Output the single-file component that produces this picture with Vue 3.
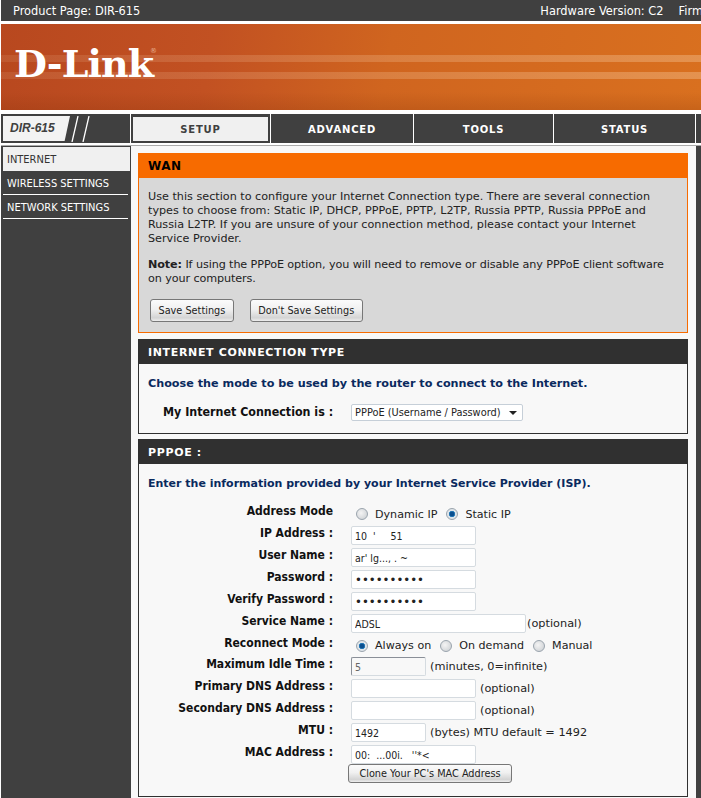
<template>
  <div class="page">
    <div class="topbar">
      <span>Product Page: DIR-615</span>
      <span class="hw">Hardware Version: C2</span>
      <span class="fw">Firmware Version: 3.01</span>
    </div>

    <div class="banner">
      <div class="logo">D-Link<span class="reg">®</span></div>
    </div>

    <div class="nav">
      <div class="model">
        <div class="model-tile">DIR-615</div>
        <svg class="slashes" width="20" height="26" viewBox="0 0 20 26">
          <path d="M7 0 L1 26 M18 0 L12 26" stroke="#fff" stroke-width="1.3" fill="none" />
        </svg>
      </div>
      <div
        v-for="t in tabs"
        :key="t.name"
        class="tab"
        :class="{ active: t.name === 'SETUP' }"
        :style="{ width: t.width + 'px' }"
      >
        <span>{{ t.name }}</span>
      </div>
    </div>

    <div class="main">
      <aside class="side">
        <div class="side-item current">INTERNET</div>
        <div class="side-item">WIRELESS SETTINGS</div>
        <div class="side-item">NETWORK SETTINGS</div>
      </aside>

      <div class="content">
        <section class="wan">
          <h2 class="wan-head">WAN</h2>
          <div class="wan-body">
            <p>Use this section to configure your Internet Connection type. There are several connection types to choose from: Static IP, DHCP, PPPoE, PPTP, L2TP, Russia PPTP, Russia PPPoE and Russia L2TP. If you are unsure of your connection method, please contact your Internet Service Provider.</p>
            <p class="note"><b>Note:</b> If using the PPPoE option, you will need to remove or disable any PPPoE client software on your computers.</p>
            <div class="btns">
              <button class="btn">Save Settings</button>
              <button class="btn">Don't Save Settings</button>
            </div>
          </div>
        </section>

        <section class="box">
          <h2 class="box-head">INTERNET CONNECTION TYPE</h2>
          <div class="box-body">
            <p class="lead wide">Choose the mode to be used by the router to connect to the Internet.</p>
            <div class="conn-row">
              <span class="label conn-label">My Internet Connection is :</span>
              <div class="select">
                <span>PPPoE (Username / Password)</span>
                <svg width="8" height="4" viewBox="0 0 8 4"><path d="M0 0 H8 L4 4 Z" fill="#222" /></svg>
              </div>
            </div>
          </div>
        </section>

        <section class="box last">
          <h2 class="box-head">PPPOE :</h2>
          <div class="box-body">
            <p class="lead">Enter the information provided by your Internet Service Provider (ISP).</p>
            <div class="form">
              <div v-for="r in rows" :key="r.label" class="row" :class="{ short: r.short }">
                <div class="label">{{ r.label }}</div>
                <div class="field" :class="{ radios: r.radios }">
                  <template v-if="r.radios">
                    <label v-for="o in r.radios" :key="o.text" class="radio-wrap">
                      <span class="radio" :class="{ on: o.on }"></span>{{ o.text }}
                    </label>
                  </template>
                  <template v-else>
                    <input
                      class="input"
                      :type="r.password ? 'password' : 'text'"
                      :value="r.value"
                      :style="{ width: r.width + 'px' }"
                      :class="{ disabled: r.disabled }"
                      readonly
                    />
                    <span v-if="r.note" class="note-text" :class="{ tight: r.tight }">{{ r.note }}</span>
                  </template>
                </div>
              </div>
              <div class="row">
                <div class="label"></div>
                <div class="clone-row"><button class="btn clone">Clone Your PC's MAC Address</button></div>
              </div>
            </div>
          </div>
        </section>
      </div>
    </div>
  </div>
</template>

<script setup>
const tabs = [
  { name: 'SETUP', width: 140 },
  { name: 'ADVANCED', width: 143 },
  { name: 'TOOLS', width: 140 },
  { name: 'STATUS', width: 142 }
]

const rows = [
  { label: 'Address Mode', radios: [{ text: 'Dynamic IP' }, { text: 'Static IP', on: true }] },
  { label: 'IP Address :', value: "10  '     51", width: 125 },
  { label: 'User Name :', value: "ar' lg..., . ~", width: 125 },
  { label: 'Password :', value: 'xxxxxxxxxx', width: 125, password: true },
  { label: 'Verify Password :', value: 'xxxxxxxxxx', width: 125, password: true },
  { label: 'Service Name :', value: 'ADSL', width: 175, note: '(optional)', tight: true },
  {
    label: 'Reconnect Mode :',
    short: true,
    radios: [{ text: 'Always on', on: true }, { text: 'On demand' }, { text: 'Manual' }]
  },
  { label: 'Maximum Idle Time :', value: '5', width: 75, note: '(minutes, 0=infinite)', disabled: true },
  { label: 'Primary DNS Address :', value: '', width: 125, note: '(optional)' },
  { label: 'Secondary DNS Address :', value: '', width: 125, note: '(optional)' },
  { label: 'MTU :', value: '1492', width: 75, note: '(bytes) MTU default = 1492' },
  { label: 'MAC Address :', value: "00:  ...00i.   ''*<", width: 125 }
]
</script>

<style>
html, body { margin: 0; background: #fff; overflow: hidden; }
</style>

<style scoped>
.page {
  width: 701px;
  height: 798px;
  overflow: hidden;
  background: #fff;
  padding-left: 1px;
  box-sizing: border-box;
  font-family: "DejaVu Sans", sans-serif;
  font-size: 11.4px;
  color: #222;
}
.topbar {
  height: 21px;
  background: #404040;
  color: #fff;
  display: flex;
  align-items: center;
  padding-left: 12px;
  white-space: nowrap;
}
.hw { margin-left: 400px; }
.fw { margin-left: 15px; }

.banner {
  margin-top: 3px;
  height: 86px;
  position: relative;
  background:
    linear-gradient(90deg, rgba(255,225,190,.1), rgba(255,225,190,.3)) 0 31px / 100% 7px no-repeat,
    linear-gradient(90deg, rgba(255,225,190,.1), rgba(255,225,190,.3)) 0 48px / 100% 7px no-repeat,
    linear-gradient(rgba(120,40,0,0) 68px, rgba(120,40,0,.18) 86px),
    linear-gradient(100deg, #b8481f 0%, #c25122 30%, #d0651f 55%, #d9701f 100%);
}
.logo {
  position: absolute;
  left: 13px;
  top: 18px;
  font-family: "DejaVu Serif", serif;
  font-weight: bold;
  font-size: 38px;
  line-height: 44px;
  letter-spacing: -0.9px;
  color: #fff;
}
.reg {
  position: absolute;
  top: 4px;
  left: 136px;
  font-family: "DejaVu Sans", sans-serif;
  font-size: 7px;
  line-height: 10px;
  font-weight: normal;
  letter-spacing: 0;
  color: #e8b090;
}

.nav {
  margin-top: 4px;
  height: 29px;
  display: flex;
  background: #404040;
  font-weight: bold;
  font-size: 10px;
  letter-spacing: 0.8px;
}
.model {
  width: 130px;
  display: flex;
  align-items: center;
  padding-left: 2px;
  box-sizing: border-box;
  border-right: 1px solid #fff;
  flex: none;
}
.model-tile {
  width: 67px;
  height: 25px;
  line-height: 25px;
  box-sizing: border-box;
  padding-left: 7px;
  background: #f3f3f3;
  clip-path: polygon(0 0, 100% 0, 92% 100%, 0 100%);
  color: #404040;
  font-family: "Liberation Sans", sans-serif;
  font-style: italic;
  font-size: 12px;
  letter-spacing: 0;
}
.slashes { margin-left: 1px; }
.tab {
  flex: none;
  box-sizing: border-box;
  border-right: 1px solid #fff;
  color: #fff;
  display: flex;
  align-items: center;
  justify-content: center;
  padding-top: 1px;
}
.tab.active {
  color: #404040;
  padding: 3px 2px;
}
.tab.active span {
  flex: 1;
  text-align: center;
  background: #f0f0f0;
  padding-top: 1px;
  line-height: 23px;
}

.main {
  margin-top: 2px;
  display: flex;
  height: 653px;
  border-top: 1px solid #aaa;
  background: #404040;
}
.side {
  width: 130px;
  flex: none;
  padding-top: 1px;
  padding-left: 2px;
  box-sizing: border-box;
  font-family: "DejaVu Sans Condensed", "DejaVu Sans", sans-serif;
  font-size: 11px;
}
.side-item {
  height: 24px;
  line-height: 26px;
  box-sizing: border-box;
  width: 125px;
  padding-left: 4px;
  color: #fff;
  border-bottom: 1px solid #fff;
  white-space: nowrap;
}
.side-item.current {
  background: #f0f0f0;
  color: #333;
  width: 127px;
  border-bottom: 0;
}
.content {
  width: 565px;
  flex: none;
  box-sizing: border-box;
  background: #f8f8f8;
  padding: 7px 8px 0 7px;
}
h2 { margin: 0; }

.wan { border: 1px solid #f76b00; border-top: 0; background: #d8d8d8; height: 180px; box-sizing: border-box; }
.wan-head {
  height: 25px;
  line-height: 26px;
  background: #f76b00;
  margin: 0 -1px;
  padding-left: 10px;
  font-size: 12px;
  letter-spacing: 0.5px;
  color: #000;
}
.wan-body { padding: 12px 9px 0; font-size: 11.2px; line-height: 14px; color: #222; }
.wan-body p { margin: 0; }
.wan-body .note { margin-top: 12px; letter-spacing: -0.1px; }
.btns { display: flex; gap: 16px; margin-top: 13px; padding-left: 2px; }
.btn {
  height: 23px;
  padding: 0 7.5px;
  border: 1px solid #777;
  border-radius: 3px;
  background: linear-gradient(#fbfbfb 0%, #f0f0f0 45%, #d4d4d4 85%, #eee 100%);
  font-family: "DejaVu Sans Condensed", "DejaVu Sans", sans-serif;
  font-size: 10.8px;
  letter-spacing: 0;
  color: #222;
}

.box { margin-top: 6px; border: 1px solid #303030; background: #f8f8f8; box-sizing: border-box; height: 95px; }
.box.last { height: 358px; margin-top: 5px; }
.box-head {
  height: 24px;
  line-height: 25px;
  background: #303030;
  color: #fff;
  padding-left: 9px;
  font-size: 11px;
  letter-spacing: 0.65px;
  font-weight: bold;
}
.box-body { padding-left: 9px; }
.lead {
  margin: 0;
  padding-top: 12px;
  font-weight: bold;
  font-size: 11px;
  line-height: 15px;
  color: #0a2a5e;
}
.lead.wide { font-size: 11.2px; }
.label {
  font-family: "DejaVu Sans Condensed", "DejaVu Sans", sans-serif;
  font-weight: bold;
  font-size: 12px;
  color: #111;
  white-space: nowrap;
}
.conn-label { font-size: 12.35px; }
.conn-row { display: flex; align-items: center; margin-top: 11px; padding-left: 15px; }
.select {
  margin-left: 18px;
  margin-top: 2px;
  width: 172px;
  height: 17px;
  box-sizing: border-box;
  border: 1px solid #c6cfd8;
  border-radius: 2px;
  background: #fff;
  display: flex;
  align-items: center;
  justify-content: space-between;
  padding: 0 5px 0 3px;
  font-family: "DejaVu Sans Condensed", "DejaVu Sans", sans-serif;
  font-size: 10.9px;
}

.form { margin-top: 11px; margin-left: -9px; }
.row { display: flex; height: 22px; gap: 18px; }
.row.short { height: 21px; }
.row > .label { width: 194px; flex: none; text-align: right; line-height: 19px; }
.field { display: flex; align-items: center; white-space: nowrap; font-size: 11.3px; }
.field.radios { padding-top: 2px; align-self: stretch; font-size: 11.1px; }
.input {
  height: 19px;
  box-sizing: border-box;
  border: 1px solid #d5dbe0;
  border-radius: 2px;
  background: #fff;
  padding: 1px 3px 0;
  font-family: "DejaVu Sans Condensed", "DejaVu Sans", sans-serif;
  font-size: 10.5px;
  color: #222;
  outline: none;
  flex: none;
}
.input[type="password"] { font-size: 13px; }
.input.disabled { border-color: #8a8f98 #d5dbe0 #d5dbe0 #8a8f98; color: #666; background: #f8f8f8; }
.note-text { margin-left: 4px; }
.note-text.tight { margin-left: 1px; }
.radio-wrap { display: inline-flex; align-items: center; margin-left: 5px; margin-right: 4px; }
.radio {
  width: 12px;
  height: 12px;
  box-sizing: border-box;
  border-radius: 50%;
  border: 1px solid #9aa4ad;
  background: radial-gradient(circle at 40% 40%, #f4f4f4, #c8ccd0);
  margin-right: 7px;
}
.radio.on {
  background: radial-gradient(circle, #0a4f8f 0 2px, #3a8ec8 3px, #dfe5ea 3.5px);
}
.clone-row { margin-top: -1px; }
.btn.clone { height: 19px; width: 164px; margin-left: -3px; padding: 0; display: block; }
</style>
